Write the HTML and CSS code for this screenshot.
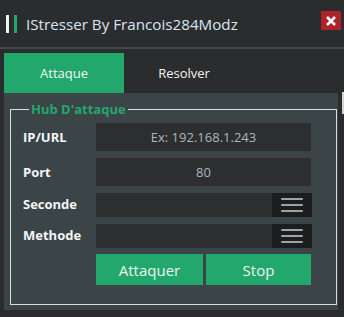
FILE: index.html
```html
<!DOCTYPE html>
<html lang="fr">
<head>
    <meta charset="UTF-8">
    <title>IStresser</title>
    <link rel="stylesheet" href="styles.css">
</head>
<body>
<div class="window">
    <div class="title-bar">
        <span class="bar bar-white"></span>
        <span class="bar bar-green"></span>
        <span class="title">IStresser By Francois284Modz</span>
        <span class="btn-close">
            <svg width="12" height="12" viewBox="0 0 12 12"><path d="M2 2 L10 10 M10 2 L2 10" stroke="#fff" stroke-width="2.6"/></svg>
        </span>
    </div>
    <div class="tab-group">
        <span class="tab tab-active">Attaque</span>
        <span class="tab">Resolver</span>
    </div>
    <div class="panel">
        <fieldset class="hub">
            <legend>Hub D'attaque</legend>
            <div class="form-row row-big">
                <label>IP/URL</label>
                <div class="field">Ex: 192.168.1.243</div>
            </div>
            <div class="form-row row-big">
                <label>Port</label>
                <div class="field">80</div>
            </div>
            <div class="form-row row-small">
                <label>Seconde</label>
                <div class="field combo"><span class="combo-btn"><i></i><i></i><i></i></span></div>
            </div>
            <div class="form-row row-small">
                <label>Methode</label>
                <div class="field combo"><span class="combo-btn"><i></i><i></i><i></i></span></div>
            </div>
            <div class="btn-group">
                <span class="btn">Attaquer</span>
                <span class="btn">Stop</span>
            </div>
        </fieldset>
    </div>
    <span class="edge"></span>
</div>
</body>
</html>
```

FILE: styles.css
```css
body{
    margin: 0;
    background-color: #2b2c2e;
    font-family: "Open Sans", "Noto Sans", sans-serif;
}
.window{
    width: 344px;
    height: 317px;
    position: relative;
    overflow: hidden;
}
.title-bar{
    height: 49px;
    display: flex;
    align-items: center;
    padding-left: 6px;
    box-sizing: border-box;
    border-bottom: 2px solid #43474a;
}
.bar{
    display: inline-block;
    width: 3px;
    height: 18px;
    margin-right: 5px;
}
.bar-white{
    background-color: #f2f2f2;
}
.bar-green{
    background-color: #22a86d;
}
.title{
    margin-left: 4px;
    color: #d8e6f2;
    font-size: 15.2px;
}
.btn-close{
    margin-left: auto;
    margin-right: 3px;
    margin-top: -6px;
    width: 20px;
    height: 19px;
    background-color: #ae2229;
    display: flex;
    align-items: center;
    justify-content: center;
}
.tab-group{
    display: flex;
    padding: 2px 0 0 4px;
    height: 42px;
    box-sizing: border-box;
    border-top: 2px solid #2b2c2e;
}
.tab{
    width: 120px;
    height: 40px;
    display: flex;
    align-items: center;
    justify-content: center;
    color: #f4f4f4;
    font-size: 13px;
}
.tab-active{
    background-color: #22a86d;
}
.panel{
    margin: 2px 6px 0 4px;
    height: 217px;
    background-color: #3b4446;
    padding: 9px 1px 0 6px;
    box-sizing: border-box;
}
.hub{
    margin: 0;
    padding: 0 0 0 12px;
    border: 1px solid #dcdcdc;
    height: 203px;
    box-sizing: border-box;
}
.hub legend{
    margin-left: 6px;
    padding: 0 2px;
    color: #22a86d;
    font-size: 13px;
    font-weight: bold;
    line-height: 14px;
}
.form-row{
    display: flex;
    margin-top: 7px;
}
.row-big{
    height: 28px;
}
.row-small{
    height: 24px;
}
.form-row label{
    width: 73px;
    color: #f4f6f8;
    font-size: 13px;
    font-weight: bold;
    padding-top: 5px;
}
.row-small label{
    padding-top: 2px;
}
.field{
    width: 215px;
    background-color: #2d2e30;
    color: #a9b6c2;
    font-size: 13px;
    display: flex;
    align-items: center;
    justify-content: center;
}
.combo{
    width: 216px;
    justify-content: flex-end;
}
.combo-btn{
    width: 40px;
    height: 100%;
    background-color: #1c1d1f;
    display: flex;
    flex-direction: column;
    align-items: center;
    justify-content: center;
    gap: 4px;
}
.combo-btn i{
    display: block;
    width: 22px;
    height: 2px;
    background-color: #a2a2a2;
    border-radius: 1px;
}
.btn-group{
    display: flex;
    gap: 3px;
    margin: 6px 0 0 73px;
}
.btn{
    width: 107px;
    height: 31px;
    background-color: #22a86d;
    color: #eef4f2;
    font-size: 15px;
    display: flex;
    align-items: center;
    justify-content: center;
}
.btn + .btn{
    width: 105px;
}
.edge{
    position: absolute;
    left: 342px;
    top: 92px;
    width: 2px;
    height: 22px;
    background-color: #d4d4d4;
}
```
